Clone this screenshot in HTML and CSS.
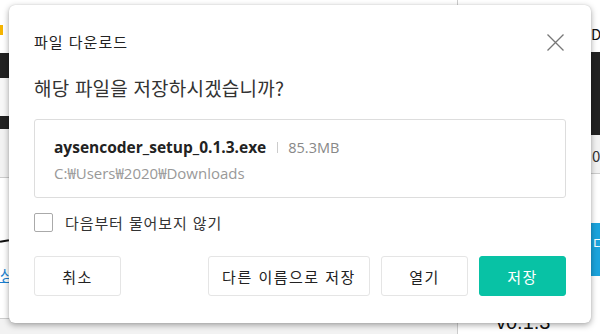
FILE: index.html
```html
<!DOCTYPE html>
<html lang="ko">
<head>
  <meta charset="UTF-8">
  <meta name="viewport" content="width=device-width, initial-scale=1.0">
  <title>파일 다운로드</title>
  <link rel="stylesheet" href="styles.css">
</head>
<body>

  <div class="page">
    <div class="left">
      <div class="top"><span class="mark"></span></div>
      <div class="dark-a"></div>
      <div class="white-a"></div>
      <div class="dark-b"></div>
      <div class="gray-a"></div>
      <div class="content">
        <span class="stroke"></span>
        <a class="link" href="#">상</a>
      </div>
      <div class="bottom"></div>
    </div>
    <div class="right">
      <div class="top-r">DI</div>
      <div class="dark-r"></div>
      <div class="gray-r">0</div>
      <div class="content-r"><span class="blue-btn">다</span></div>
      <div class="version">v0.1.3</div>
    </div>
  </div>

  <div class="dialog">
    <div class="head">
      <h1 class="title">파일 다운로드</h1>
      <button class="close" type="button" aria-label="닫기">
        <svg width="17" height="17" viewBox="0 0 17 17">
          <path d="M0.5 0.5 L16.5 16.5 M16.5 0.5 L0.5 16.5" stroke="#777" stroke-width="1.3" fill="none"/>
        </svg>
      </button>
    </div>

    <p class="question">해당 파일을 저장하시겠습니까?</p>

    <div class="filebox">
      <div class="fileline">
        <span class="filename">aysencoder_setup_0.1.3.exe</span>
        <span class="sep"></span>
        <span class="size">85.3MB</span>
      </div>
      <div class="path">C:₩Users₩2020₩Downloads</div>
    </div>

    <label class="check">
      <input type="checkbox">
      <span class="box"></span>
      다음부터 물어보지 않기
    </label>

    <div class="actions">
      <button class="btn cancel" type="button">취소</button>
      <button class="btn saveas" type="button">다른 이름으로 저장</button>
      <button class="btn" type="button">열기</button>
      <button class="btn primary" type="button">저장</button>
    </div>
  </div>

</body>
</html>
```

FILE: styles.css
```css
* {
  box-sizing: border-box;
}
body {
  margin: 0;
  width: 600px;
  height: 334px;
  overflow: hidden;
  font-family: "Noto Sans CJK KR", "Open Sans", sans-serif;
  background: #fff;
}

/* background page, mostly hidden by the dialog */
.page {
  display: grid;
  grid-template-columns: 457px 143px;
  height: 334px;
}
.left {
  display: flex;
  flex-direction: column;
  overflow: hidden;
}
.top {
  height: 53px;
  padding-top: 25px;
}
.mark {
  display: block;
  width: 3px;
  height: 10px;
  background: #f5b400;
}
.dark-a {
  height: 25px;
  background: #222;
}
.white-a {
  height: 38px;
  background: #f7f7f7;
}
.dark-b {
  height: 13px;
  background: #222;
}
.gray-a {
  height: 49px;
  background: #f2f2f2;
  border-bottom: 1px solid #ccc;
}
.content {
  height: 141px;
  padding-top: 62px;
  border-bottom: 1px solid #ccc;
}
.stroke {
  display: block;
  width: 9px;
  height: 2px;
  background: #111;
  transform: rotate(-10deg);
}
.link {
  display: block;
  margin-top: 22px;
  font-size: 15px;
  color: #1a7fd0;
}
.bottom {
  flex: 1;
  background: #f2f2f2;
}
.right {
  display: flex;
  flex-direction: column;
  border-left: 1px solid #ccc;
  overflow: hidden;
}
.top-r {
  height: 53px;
  padding: 23px 0 0 133px;
  font-size: 15px;
  color: #111;
  white-space: nowrap;
}
.dark-r {
  height: 85px;
  background: #222;
}
.gray-r {
  height: 40px;
  padding: 10px 0 0 134px;
  background: #f2f2f2;
  border-bottom: 1px solid #ccc;
  font-size: 15px;
  color: #333;
}
.content-r {
  height: 140px;
  padding: 49px 0 0 133px;
}
.blue-btn {
  display: block;
  width: 30px;
  height: 53px;
  padding: 10px 0 0 2px;
  background: #1ba3dc;
  color: #fff;
  font-size: 14px;
}
.version {
  padding-left: 38px;
  font-family: "Liberation Sans", sans-serif;
  font-size: 20px;
  color: #111;
}

/* dialog */
.dialog {
  position: absolute;
  left: 9px;
  top: 5px;
  width: 582px;
  height: 318px;
  padding: 27px 25px 0;
  background: #fff;
  border-radius: 6px;
  box-shadow: 0 2px 6px rgba(0, 0, 0, 0.35), 0 0 1px rgba(0, 0, 0, 0.2);
}
.head {
  display: flex;
  justify-content: space-between;
  align-items: center;
  height: 20px;
}
.title {
  margin: 0;
  font-size: 15px;
  font-weight: normal;
  letter-spacing: 1px;
  line-height: 20px;
  color: #222;
}
.close {
  width: 17px;
  height: 17px;
  margin-right: 2px;
  padding: 0;
  border: none;
  background: none;
}
.close svg {
  display: block;
}
.question {
  margin: 24px 0 0;
  font-size: 19px;
  letter-spacing: 0.2px;
  line-height: 24px;
  color: #333;
}
.filebox {
  margin-top: 19px;
  height: 79px;
  padding: 17px 19px 0;
  border: 1px solid #ddd;
  border-radius: 3px;
}
.fileline {
  display: flex;
  align-items: center;
  height: 20px;
}
.filename {
  font-family: "Open Sans", "Noto Sans CJK KR", sans-serif;
  font-size: 15.5px;
  font-weight: bold;
  color: #222;
}
.sep {
  width: 1px;
  height: 11px;
  margin: 0 10px 0 11px;
  background: #ccc;
}
.size {
  font-family: "Open Sans", "Noto Sans CJK KR", sans-serif;
  font-size: 14.5px;
  color: #888;
}
.path {
  margin-top: 6px;
  font-family: "Open Sans", "Noto Sans CJK KR", sans-serif;
  font-size: 15px;
  line-height: 20px;
  color: #999;
}
.check {
  display: flex;
  align-items: center;
  gap: 12px;
  margin-top: 15px;
  height: 19px;
  font-size: 15px;
  letter-spacing: 0.9px;
  color: #333;
}
.check input {
  display: none;
}
.box {
  width: 19px;
  height: 19px;
  border: 1px solid #aaa;
  border-radius: 2px;
}
.actions {
  display: flex;
  gap: 11px;
  margin-top: 24px;
}
.btn {
  width: 87px;
  height: 40px;
  padding: 0;
  border: 1px solid #e5e5e5;
  border-radius: 3px;
  background: #fff;
  font-family: "Noto Sans CJK KR", sans-serif;
  font-size: 15px;
  letter-spacing: 1.5px;
  color: #222;
}
.cancel {
  margin-right: auto;
}
.saveas {
  width: 162px;
}
.primary {
  border-color: #08c2a5;
  background: #08c2a5;
  color: #fff;
}
```
